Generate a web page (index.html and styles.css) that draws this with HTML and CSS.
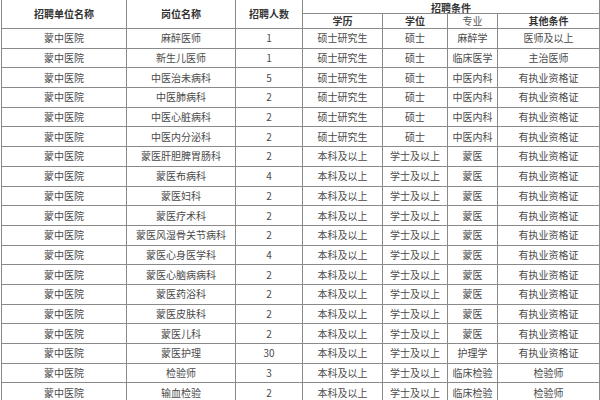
FILE: index.html
```html
<!DOCTYPE html>
<html lang="zh">
<head>
<meta charset="utf-8">
<link rel="stylesheet" href="styles.css">
</head>
<body>
<div class="wrap">
<table class="tbl">
<colgroup>
<col class="c1"><col class="c2"><col class="c3"><col class="c4"><col class="c5"><col class="c6"><col class="c7">
</colgroup>
<thead>
<tr class="h1">
<th rowspan="2">招聘单位名称</th>
<th rowspan="2">岗位名称</th>
<th rowspan="2">招聘人数</th>
<th colspan="4" class="top">招聘条件</th>
</tr>
<tr class="h2">
<th>学历</th><th>学位</th><th class="light">专业</th><th>其他条件</th>
</tr>
</thead>
<tbody>
<tr><td>蒙中医院</td><td>麻醉医师</td><td>1</td><td>硕士研究生</td><td>硕士</td><td>麻醉学</td><td>医师及以上</td></tr>
<tr><td>蒙中医院</td><td>新生儿医师</td><td>1</td><td>硕士研究生</td><td>硕士</td><td>临床医学</td><td>主治医师</td></tr>
<tr><td>蒙中医院</td><td>中医治未病科</td><td>5</td><td>硕士研究生</td><td>硕士</td><td>中医内科</td><td>有执业资格证</td></tr>
<tr><td>蒙中医院</td><td>中医肺病科</td><td>2</td><td>硕士研究生</td><td>硕士</td><td>中医内科</td><td>有执业资格证</td></tr>
<tr><td>蒙中医院</td><td>中医心脏病科</td><td>2</td><td>硕士研究生</td><td>硕士</td><td>中医内科</td><td>有执业资格证</td></tr>
<tr><td>蒙中医院</td><td>中医内分泌科</td><td>2</td><td>硕士研究生</td><td>硕士</td><td>中医内科</td><td>有执业资格证</td></tr>
<tr><td>蒙中医院</td><td>蒙医肝胆脾胃肠科</td><td>2</td><td>本科及以上</td><td>学士及以上</td><td>蒙医</td><td>有执业资格证</td></tr>
<tr><td>蒙中医院</td><td>蒙医布病科</td><td>4</td><td>本科及以上</td><td>学士及以上</td><td>蒙医</td><td>有执业资格证</td></tr>
<tr><td>蒙中医院</td><td>蒙医妇科</td><td>2</td><td>本科及以上</td><td>学士及以上</td><td>蒙医</td><td>有执业资格证</td></tr>
<tr><td>蒙中医院</td><td>蒙医疗术科</td><td>2</td><td>本科及以上</td><td>学士及以上</td><td>蒙医</td><td>有执业资格证</td></tr>
<tr><td>蒙中医院</td><td>蒙医风湿骨关节病科</td><td>2</td><td>本科及以上</td><td>学士及以上</td><td>蒙医</td><td>有执业资格证</td></tr>
<tr><td>蒙中医院</td><td>蒙医心身医学科</td><td>4</td><td>本科及以上</td><td>学士及以上</td><td>蒙医</td><td>有执业资格证</td></tr>
<tr><td>蒙中医院</td><td>蒙医心脑病病科</td><td>2</td><td>本科及以上</td><td>学士及以上</td><td>蒙医</td><td>有执业资格证</td></tr>
<tr><td>蒙中医院</td><td>蒙医药浴科</td><td>2</td><td>本科及以上</td><td>学士及以上</td><td>蒙医</td><td>有执业资格证</td></tr>
<tr><td>蒙中医院</td><td>蒙医皮肤科</td><td>2</td><td>本科及以上</td><td>学士及以上</td><td>蒙医</td><td>有执业资格证</td></tr>
<tr><td>蒙中医院</td><td>蒙医儿科</td><td>2</td><td>本科及以上</td><td>学士及以上</td><td>蒙医</td><td>有执业资格证</td></tr>
<tr><td>蒙中医院</td><td>蒙医护理</td><td>30</td><td>本科及以上</td><td>学士及以上</td><td>护理学</td><td>有执业资格证</td></tr>
<tr><td>蒙中医院</td><td>检验师</td><td>3</td><td>本科及以上</td><td>学士及以上</td><td>临床检验</td><td>检验师</td></tr>
<tr><td>蒙中医院</td><td>输血检验</td><td>2</td><td>本科及以上</td><td>学士及以上</td><td>临床检验</td><td>检验师</td></tr>
</tbody>
</table>
</div>
</body>
</html>
```

FILE: styles.css
```css
html, body {
  margin: 0;
  padding: 0;
  background: #fff;
  overflow: hidden;
}
.wrap {
  padding: 0 1px;
  width: 598px;
}
.tbl {
  table-layout: fixed;
  border-collapse: collapse;
  width: 598px;
  font-family: "Noto Sans CJK SC", "Liberation Sans", sans-serif;
  font-size: 10px;
  color: #4a4a4a;
}
.c1 { width: 125px; }
.c2 { width: 109px; }
.c3 { width: 67px; }
.c4 { width: 80px; }
.c5 { width: 65px; }
.c6 { width: 50px; }
.c7 { width: 102px; }
.tbl th, .tbl td {
  border: 1px solid #8a8a8a;
  padding: 0;
  text-align: center;
  vertical-align: middle;
  line-height: 12px;
  white-space: nowrap;
}
.tbl td {
  overflow: hidden;
}
.tbl th {
  font-weight: bold;
  color: #333;
}
.tbl th.light {
  font-weight: normal;
  color: #555;
}
.tbl .h1 th {
  border-top: 0;
  height: 12px;
}
.tbl th.top {
  line-height: 11px;
  padding-top: 1px;
}
.tbl .h2 th {
  height: 14px;
}
.tbl td {
  height: 18.7px;
}
```
